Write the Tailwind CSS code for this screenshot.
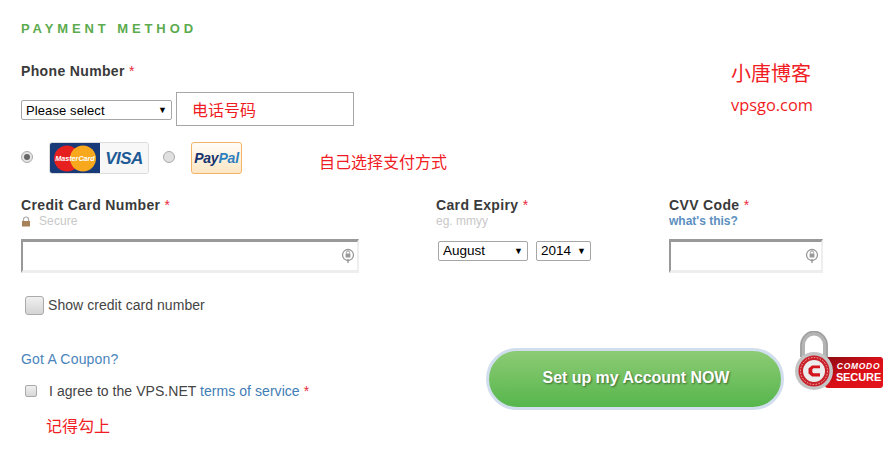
<!DOCTYPE html>
<html lang="zh-CN">
<head>
    <meta charset="UTF-8">
    <title>Payment Method</title>
    <script src="https://cdn.jsdelivr.net/npm/@tailwindcss/browser@4"></script>
</head>
<body class="bg-white font-['Liberation_Sans','Noto_Sans_CJK_SC',sans-serif] text-[#444]">
<main class="relative w-[891px] h-[456px] overflow-hidden pl-[21px] pt-[21px]">

    <h2 class="h-[16px] leading-[16px] text-[13px] font-bold tracking-[3.9px] text-[#5cab4e]">PAYMENT METHOD</h2>

    <label class="block mt-[26px] h-[17px] leading-[17px] text-[14px] font-bold tracking-[0.35px] text-[#3a3a3a]">Phone Number <span class="text-[#e8283c] font-normal">*</span></label>

    <!-- phone row -->
    <div class="mt-[12px] flex items-center h-[34px]">
        <div class="mt-[2px] w-[151px] h-[20px] border border-[#a6a6a6] rounded-[2px] px-[4px] pt-px flex items-center justify-between text-[13px] text-black tracking-[0.1px]">
            <span>Please select</span><span class="text-[9px]">▼</span>
        </div>
        <div class="ml-[4px] w-[178px] h-[34px] border border-[#a6a6a6]"></div>
    </div>

    <!-- payment options -->
    <div class="mt-[16px] flex items-center h-[32px]">
        <span class="mb-[2px] w-[12px] h-[12px] rounded-full border border-[#aaa] bg-[#e4e4e4] flex items-center justify-center"><span class="w-[6px] h-[6px] rounded-full bg-[#666]"></span></span>
        <div class="ml-[16px] w-[100px] h-[32px] flex rounded-[3px] overflow-hidden border border-[#dcdcdc]">
            <div class="w-[51px] -my-px -ml-px bg-[#183a78] flex items-center justify-center">
                <svg width="44" height="27" viewBox="0 0 44 27">
                    <circle cx="14" cy="13.5" r="13" fill="#e5201f"/>
                    <circle cx="30" cy="13.5" r="13" fill="#f8a81c"/>
                    <text x="22" y="16" text-anchor="middle" font-size="7.2" font-weight="bold" font-style="italic" fill="#fff" font-family="Liberation Sans">MasterCard</text>
                </svg>
            </div>
            <div class="flex-1 bg-[#f7f7f7] flex items-center justify-center text-[17px] leading-none font-bold italic text-[#1d5a96] tracking-[-0.5px]">VISA</div>
        </div>
        <span class="mb-[2px] ml-[14px] w-[12px] h-[12px] rounded-full border border-[#aaa] bg-[#e0e0e0]"></span>
        <div class="ml-[16px] w-[51px] h-[32px] rounded-[3px] border border-[#f4b467] bg-linear-to-b from-[#fffdf9] to-[#fde6c3] flex items-center justify-center text-[14px] leading-none font-bold italic tracking-[-0.2px]">
            <span class="text-[#17326e]">Pay</span><span class="text-[#2f7fc1]">Pal</span>
        </div>
    </div>

    <!-- card fields -->
    <div class="mt-[23px] flex">
        <div class="w-[415px]">
            <label class="block h-[17px] leading-[17px] text-[14px] font-bold tracking-[0.35px] text-[#3a3a3a]">Credit Card Number <span class="text-[#e8283c] font-normal">*</span></label>
            <div class="h-[15px] leading-[15px] flex items-center text-[12px] tracking-[0.1px] text-[#c8c8c8]">
                <svg width="10" height="11" viewBox="0 0 10 11" class="mr-[8px]"><path d="M2.5 5V3.5a2.5 2.5 0 0 1 5 0V5" fill="none" stroke="#aaa" stroke-width="1.2"/><rect x="1" y="5" width="8" height="5.5" fill="#a8825a"/></svg>
                Secure
            </div>
            <div class="mt-[10px] w-[338px] h-[34px] border-t-[3px] border-l-[2px] border-b-[3px] border-r-[2px] border-t-[#999] border-l-[#999] border-b-[#eee] border-r-[#eee] flex items-center justify-end pr-[2px]">
                <svg width="14" height="16" viewBox="0 0 14 16"><circle cx="7" cy="7" r="5.5" fill="none" stroke="#999" stroke-width="1.3"/><rect x="4.6" y="5.5" width="4.8" height="4" fill="#999"/><path d="M5.4 5.5V4.5a1.6 1.6 0 0 1 3.2 0v1" fill="none" stroke="#999"/><path d="M7 11v4" stroke="#999" stroke-width="1.4"/></svg>
            </div>
        </div>
        <div class="w-[233px]">
            <label class="block h-[17px] leading-[17px] text-[14px] font-bold tracking-[0.35px] text-[#3a3a3a]">Card Expiry <span class="text-[#e8283c] font-normal">*</span></label>
            <div class="h-[15px] leading-[15px] text-[12px] text-[#c8c8c8]">eg. mmyy</div>
            <div class="mt-[12px] ml-[2px] flex gap-[8px]">
                <div class="w-[90px] h-[20px] border border-[#a6a6a6] rounded-[2px] px-[4px] pt-px flex items-center justify-between text-[13.5px] text-black"><span>August</span><span class="text-[9px]">▼</span></div>
                <div class="w-[55px] h-[20px] border border-[#a6a6a6] rounded-[2px] px-[4px] pt-px flex items-center justify-between text-[13.5px] text-black"><span>2014</span><span class="text-[9px]">▼</span></div>
            </div>
        </div>
        <div>
            <label class="block h-[17px] leading-[17px] text-[14px] font-bold tracking-[0.35px] text-[#3a3a3a]">CVV Code <span class="text-[#e8283c] font-normal">*</span></label>
            <div class="h-[15px] leading-[15px] text-[12px] font-bold text-[#5b8fc0]">what's this?</div>
            <div class="mt-[10px] w-[154px] h-[34px] border-t-[3px] border-l-[2px] border-b-[3px] border-r-[2px] border-t-[#999] border-l-[#999] border-b-[#eee] border-r-[#eee] flex items-center justify-end pr-[2px]">
                <svg width="14" height="16" viewBox="0 0 14 16"><circle cx="7" cy="7" r="5.5" fill="none" stroke="#999" stroke-width="1.3"/><rect x="4.6" y="5.5" width="4.8" height="4" fill="#999"/><path d="M5.4 5.5V4.5a1.6 1.6 0 0 1 3.2 0v1" fill="none" stroke="#999"/><path d="M7 11v4" stroke="#999" stroke-width="1.4"/></svg>
            </div>
        </div>
    </div>

    <div class="mt-[23px] ml-[4px] flex items-center h-[19px] text-[14px] tracking-[0.05px]">
        <span class="w-[19px] h-[19px] rounded-[3px] border border-[#aaa] bg-linear-to-b from-[#f0f0f0] to-[#d4d4d4]"></span>
        <span class="ml-[4px]">Show credit card number</span>
    </div>

    <!-- coupon, terms and submit -->
    <div class="mt-[20px] flex">
        <div class="w-[465px]">
            <div class="mt-[16px] h-[16px] leading-[16px] text-[14px] tracking-[0.2px] text-[#4a84bb]">Got A Coupon?</div>
            <div class="mt-[16px] ml-[4px] flex items-center h-[16px] text-[14px] tracking-[0.05px]">
                <span class="w-[12px] h-[12px] rounded-[2px] border border-[#aaa] bg-linear-to-b from-[#efefef] to-[#d8d8d8]"></span>
                <span class="ml-[12px]">I agree to the VPS.NET <span class="text-[#3f7db5]">terms of service</span> <span class="text-[#e8283c]">*</span></span>
            </div>
        </div>
        <button class="w-[298px] h-[62px] mt-[13px] pb-[2px] pl-[2px] rounded-full border-[3px] border-[#d0deee] bg-linear-to-b from-[#8ccb74] to-[#55b64c] text-white text-[16px] tracking-[-0.05px] font-bold [text-shadow:1px_1px_2px_rgba(0,0,0,0.45)]">Set up my Account NOW</button>
    </div>

    <!-- Comodo seal, sits over the corner of the page -->
    <div class="absolute left-[795px] top-[331px] w-[89px] h-[60px]">
        <div class="absolute left-[30px] top-[26px] w-[58px] h-[31px] rounded-[3px] bg-linear-to-br from-[#8a0a10] via-[#d90f18] to-[#e5141c] flex flex-col items-center justify-center pl-[9px] text-white font-bold leading-none">
            <span class="text-[8.5px] italic tracking-[0.7px]">COMODO</span>
            <span class="text-[11px] mt-[2px] tracking-[-0.1px]">SECURE</span>
        </div>
        <svg class="absolute left-0 top-0" width="40" height="60" viewBox="0 0 40 60">
            <path d="M7.5 26V14.5a11.5 12.5 0 0 1 23 0V26" fill="none" stroke="#b4b4b4" stroke-width="5"/>
            <path d="M6 26V14.5a13 14 0 0 1 26 0V26" fill="none" stroke="#8e8e8e" stroke-width="0.8"/>
            <circle cx="19" cy="40" r="19" fill="#c4c4c4"/>
            <circle cx="19" cy="40" r="15.5" fill="#c9202a"/>
            <circle cx="19" cy="40" r="13.5" fill="none" stroke="#f2b8b8" stroke-width="1" stroke-dasharray="1.5 1.5"/>
            <circle cx="19" cy="40" r="11" fill="#ececec"/>
            <path d="M25 34.5h-8l-3.5 3v5l3.5 3h8v-3.2h-6.5l-1.2-1v-3l1.2-1H25z" fill="#d3141c"/>
        </svg>
    </div>

    <!-- red notes pasted on top of the screenshot -->
    <span class="absolute left-[192px] top-[100px] text-[16px] leading-[22px] text-[#f01c24]">电话号码</span>
    <span class="absolute left-[319px] top-[152px] text-[16px] leading-[22px] text-[#f01c24]">自己选择支付方式</span>
    <span class="absolute left-[731px] top-[60px] text-[20px] leading-[28px] text-[#f01c24]">小唐博客</span>
    <span class="absolute left-[731px] top-[94px] text-[16.4px] leading-[22px] text-[#f01c24] font-['Open_Sans',sans-serif]">vpsgo.com</span>
    <span class="absolute left-[46px] top-[416px] text-[16px] leading-[22px] text-[#f01c24]">记得勾上</span>
</main>
</body>
</html>
